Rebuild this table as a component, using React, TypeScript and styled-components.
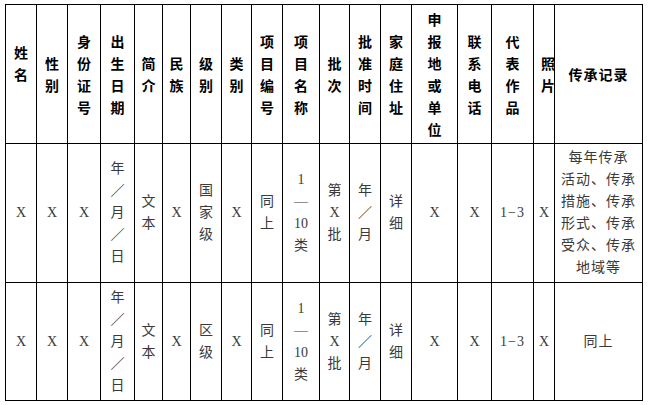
import React from "react";
import styled, { createGlobalStyle } from "styled-components";

const GlobalStyle = createGlobalStyle`
  html, body {
    margin: 0;
    padding: 0;
    background: #ffffff;
  }
  body {
    padding: 4px 0 0 5px;
    font-family: "Liberation Serif", "Noto Sans CJK SC", serif;
  }
`;

type CellData = { lines: string[]; shift?: boolean; wide?: boolean };

const headers: CellData[] = [
  { lines: ["姓", "名", ""] },
  { lines: ["性", "别"] },
  { lines: ["身", "份", "证", "号"] },
  { lines: ["出", "生", "日", "期"] },
  { lines: ["简", "介"] },
  { lines: ["民", "族"] },
  { lines: ["级", "别"] },
  { lines: ["类", "别"] },
  { lines: ["项", "目", "编", "号"] },
  { lines: ["项", "目", "名", "称"] },
  { lines: ["批", "次"] },
  { lines: ["批", "准", "时", "间"] },
  { lines: ["家", "庭", "住", "址"] },
  { lines: ["申", "报", "地", "或", "单", "位"] },
  { lines: ["联", "系", "电", "话"] },
  { lines: ["代", "表", "作", "品"] },
  { lines: ["照", "片"], shift: true },
  { lines: ["传承记录"], wide: true },
];

const common = (level: string[]): CellData[] => [
  { lines: ["X"] },
  { lines: ["X"] },
  { lines: ["X"] },
  { lines: ["年", "／", "月", "／", "日"] },
  { lines: ["文", "本"] },
  { lines: ["X"] },
  { lines: level },
  { lines: ["X"] },
  { lines: ["同", "上"] },
  { lines: ["1", "—", "10", "类"] },
  { lines: ["第", "X", "批"] },
  { lines: ["年", "／", "月"] },
  { lines: ["详", "细"] },
  { lines: ["X"] },
  { lines: ["X"] },
  { lines: ["1−3"], wide: true },
  { lines: ["X"] },
];

const rows: CellData[][] = [
  [
    ...common(["国", "家", "级"]),
    {
      lines: [
        "每年传承",
        "活动、传承",
        "措施、传承",
        "形式、传承",
        "受众、传承",
        "地域等",
      ],
      wide: true,
    },
  ],
  [...common(["区", "级"]), { lines: ["同上"], wide: true }],
];

const Table = styled.div`
  display: grid;
  width: max-content;
  grid-template-columns: 30px 30px 32px 33px 27px 27px 30px 29px 30px 36px 29px 30px 30px 45px 33px 41px 20px 87px;
  grid-template-rows: 138px 138px 117px;
  gap: 1px;
  padding: 1px;
  background: #000000;
`;

const Cell = styled.div<{ $head?: boolean; $shift?: boolean; $wide?: boolean }>`
  background: #ffffff;
  display: flex;
  flex-direction: column;
  justify-content: center;
  align-items: ${(p) => (p.$shift ? "flex-start" : "center")};
  padding-left: ${(p) => (p.$shift ? "7px" : "0")};
  font-size: 14px;
  line-height: 22px;
  text-align: center;
  white-space: nowrap;
  letter-spacing: ${(p) => (p.$wide ? "1px" : "0")};
  color: ${(p) => (p.$head ? "#000000" : "#3a3a3a")};
  font-weight: ${(p) => (p.$head ? 700 : 400)};
  font-family: ${(p) =>
    p.$head
      ? `"Noto Sans CJK SC", sans-serif`
      : `"Liberation Serif", "Noto Sans CJK SC", serif`};
`;

const Line = styled.span`
  display: block;
  min-height: 22px;
`;

const renderCell = (c: CellData, key: string, head?: boolean) => (
  <Cell key={key} $head={head} $shift={c.shift} $wide={c.wide}>
    {c.lines.map((l, i) => (
      <Line key={i}>{l}</Line>
    ))}
  </Cell>
);

const App: React.FC = () => {
  return (
    <>
      <GlobalStyle />
      <Table>
        {headers.map((h, i) => renderCell(h, `h${i}`, true))}
        {rows.map((r, ri) => r.map((c, ci) => renderCell(c, `r${ri}-${ci}`)))}
      </Table>
    </>
  );
};

export default App;
